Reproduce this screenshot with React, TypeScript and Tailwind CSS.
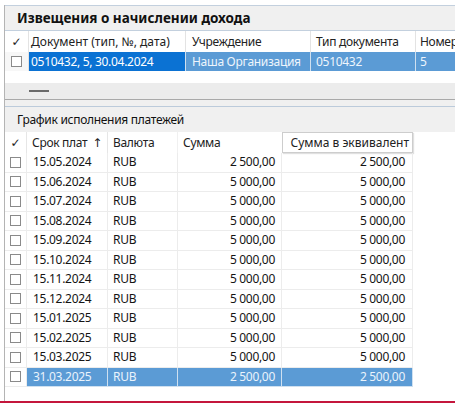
import React from "react";

const font = "font-['Segoe_UI','Noto_Sans','DejaVu_Sans',sans-serif]";

function Check() {
  return <span className="inline-block w-[11px] h-[11px] border border-[#8a8a8a] bg-white" />;
}

const rows: [string, string, string][] = [
  ["15.05.2024", "2 500,00", "2 500,00"],
  ["15.06.2024", "5 000,00", "5 000,00"],
  ["15.07.2024", "5 000,00", "5 000,00"],
  ["15.08.2024", "5 000,00", "5 000,00"],
  ["15.09.2024", "5 000,00", "5 000,00"],
  ["15.10.2024", "5 000,00", "5 000,00"],
  ["15.11.2024", "5 000,00", "5 000,00"],
  ["15.12.2024", "5 000,00", "5 000,00"],
  ["15.01.2025", "5 000,00", "5 000,00"],
  ["15.02.2025", "5 000,00", "5 000,00"],
  ["15.03.2025", "5 000,00", "5 000,00"],
  ["31.03.2025", "2 500,00", "2 500,00"],
];

export default function App() {
  return (
    <div className={`w-[455px] h-[413px] bg-white overflow-hidden text-[12px] tracking-[-0.3px] text-[#141414] ${font}`}>
      <div className="h-[5px]" />
      <div className="ml-[4px] border-l border-[#b4b4b4]">
        {/* Panel 1 */}
        <div className="h-[26px] bg-[#f0f0f0] border-t border-b border-[#c3d0de] flex items-center pl-[12px] font-bold text-[13.5px] tracking-normal text-[#111]">
          Извещения о начислении дохода
        </div>
        <div className="flex h-[21px] bg-white items-center text-[#222] whitespace-nowrap">
          <div className="w-[24px] h-full flex items-center justify-center border-r border-[#e3e3e3] text-[12px]">✓</div>
          <div className="w-[157px] h-full flex items-center pl-[2px] border-r border-[#e3e3e3] overflow-hidden tracking-normal">Документ (тип, №, дата)</div>
          <div className="w-[125px] h-full flex items-center pl-[6px] border-r border-[#e3e3e3] overflow-hidden">Учреждение</div>
          <div className="w-[105px] h-full flex items-center pl-[5px] border-r border-[#e3e3e3] overflow-hidden">Тип документа</div>
          <div className="flex-1 h-full flex items-center pl-[4px] overflow-hidden">Номер</div>
        </div>
        <div className="flex h-[19px] items-stretch whitespace-nowrap">
          <div className="w-[24px] flex items-center justify-center bg-[#f7f7f7] border-r border-[#e3e3e3]"><Check /></div>
          <div className="w-[157px] flex items-center pl-[2px] bg-[#0b72d3] text-white border-r border-[#cfe0f0] overflow-hidden">0510432, 5, 30.04.2024</div>
          <div className="w-[125px] flex items-center pl-[6px] bg-[#5b9bd5] text-[#eef5fc] border-r border-[#cfe0f0] overflow-hidden">Наша Организация</div>
          <div className="w-[105px] flex items-center pl-[5px] bg-[#5b9bd5] text-[#eef5fc] border-r border-[#cfe0f0] overflow-hidden">0510432</div>
          <div className="flex-1 flex items-center pl-[4px] bg-[#5b9bd5] text-[#eef5fc]">5</div>
        </div>
        <div className="h-[12px] bg-white" />
        <div className="h-[16px] bg-[#ececec] flex items-center pl-[24px]">
          <span className="block w-[20px] h-[1.5px] bg-[#6a6a6a]" />
        </div>
        <div className="h-[1px] bg-[#a9a9a9]" />
        <div className="h-[6px] bg-[#f0f0f0]" />

        {/* Panel 2 */}
        <div className="h-[26px] bg-[#f0f0f0] border-t border-[#bccbdb] flex items-center pl-[12px] text-[#111]">
          График исполнения платежей
        </div>
        <div className="flex h-[21px] bg-white whitespace-nowrap text-[#222]">
          <div className="w-[22px] flex items-center justify-center border-r border-[#e6e6e6]">✓</div>
          <div className="w-[81px] flex items-center pl-[5px] border-r border-[#e6e6e6]">Срок плат <span className="ml-[5px] text-[12px]">↑</span></div>
          <div className="w-[70px] flex items-center pl-[5px] border-r border-[#f0f0f0]">Валюта</div>
          <div className="w-[104px] flex items-center pl-[5px]">Сумма</div>
          <div className="w-[131px] flex items-center justify-end pr-[3px] border border-[#cdcdcd] shadow-[1px_1px_1px_rgba(0,0,0,0.12)] bg-white tracking-normal">Сумма в эквивалент</div>
        </div>
        {rows.map(([d, s, e], i) => {
          const sel = i === rows.length - 1;
          const cell = sel ? "bg-[#5b9bd5] text-[#eaf3fc] border-[#cfe0f0]" : "border-[#ececec]";
          return (
            <div key={i} className="flex h-[19.5px] whitespace-nowrap">
              <div className="w-[22px] flex items-center justify-center border-r border-b border-[#ececec] bg-white"><Check /></div>
              <div className={`w-[81px] flex items-center pl-[6px] border-r border-b ${cell}`}>{d}</div>
              <div className={`w-[70px] flex items-center pl-[5px] border-r border-b ${cell}`}>RUB</div>
              <div className={`w-[104px] flex items-center justify-end pr-[6px] border-r border-b ${cell}`}>{s}</div>
              <div className={`w-[131px] flex items-center justify-end pr-[7px] border-r border-b ${cell}`}>{e}</div>
            </div>
          );
        })}
        <div className="h-[14px] bg-white" />
      </div>
      <div className="h-[2px] bg-[#c4163c]" />
    </div>
  );
}
